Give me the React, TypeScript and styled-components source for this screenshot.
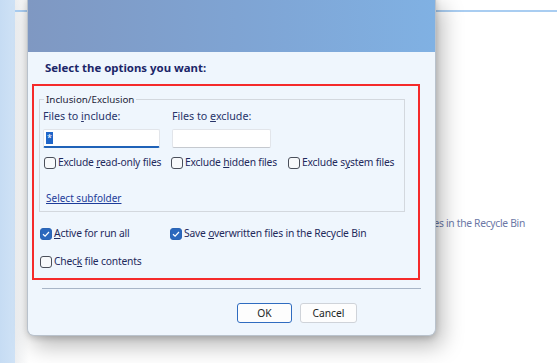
import styled, { createGlobalStyle } from "styled-components";

const GlobalStyle = createGlobalStyle`
  html, body {
    margin: 0;
    padding: 0;
  }
  body {
    font-family: "Noto Sans", "Open Sans", sans-serif;
    font-size: 10.3px;
    color: #1f2a5c;
  }
`;

function Check({ checked, children }: { checked?: boolean; children: React.ReactNode }) {
  return (
    <CheckRow>
      <Box $checked={checked}>
        {checked && (
          <svg width="10" height="10" viewBox="0 0 10 10">
            <path d="M2 5.2 L4.1 7.2 L8 3" fill="none" stroke="#fff" strokeWidth="1.2" />
          </svg>
        )}
      </Box>
      <span>{children}</span>
    </CheckRow>
  );
}

export default function App() {
  return (
    <>
      <GlobalStyle />
      <Desktop>
        <LeftStrip />
        <BackWindow>
          <BackLine />
          <BackText>Save overwritten files in the Recycle Bin</BackText>
        </BackWindow>

        <Dialog>
          <Header />
          <Body>
            <Title>Select the options you want:</Title>
            <Highlight>
              <Group>
                <Legend>Inclusion/Exclusion</Legend>
                <FieldRow>
                  <Field>
                    <Label>Files to <u>i</u>nclude:</Label>
                    <TextBox $focused>
                      <Selected>*</Selected>
                    </TextBox>
                  </Field>
                  <Field>
                    <Label>Files to <u>e</u>xclude:</Label>
                    <TextBox $width={99} />
                  </Field>
                </FieldRow>
                <ChecksRow>
                  <ChecksCol $width={127}>
                    <Check>Exclude <u>r</u>ead-only files</Check>
                  </ChecksCol>
                  <ChecksCol $width={117}>
                    <Check>Exclude <u>h</u>idden files</Check>
                  </ChecksCol>
                  <ChecksCol>
                    <Check>Exclude s<u>y</u>stem files</Check>
                  </ChecksCol>
                </ChecksRow>
                <Link>Select subfolder</Link>
              </Group>
              <OptionsRow $gap={14}>
                <ChecksCol $width={130}>
                  <Check checked><u>A</u>ctive for run all</Check>
                </ChecksCol>
                <Check checked>Save <u>o</u>verwritten files in the Recycle Bin</Check>
              </OptionsRow>
              <OptionsRow $gap={13}>
                <Check>Chec<u>k</u> file contents</Check>
              </OptionsRow>
            </Highlight>
            <Separator />
            <Buttons>
              <Button $default>OK</Button>
              <Button>Cancel</Button>
            </Buttons>
          </Body>
        </Dialog>
      </Desktop>
    </>
  );
}

const Desktop = styled.div`
  position: relative;
  display: flex;
  width: 557px;
  height: 363px;
  overflow: hidden;
  background: #ffffff;
`;

const LeftStrip = styled.div`
  width: 15px;
  flex: none;
  background: linear-gradient(90deg, #c6dcf3, #cfe2f6);
`;

const BackWindow = styled.div`
  flex: 1;
  display: flex;
  flex-direction: column;
  background: linear-gradient(90deg, #eceef0 0px, #ffffff 14px);
`;

const BackLine = styled.div`
  height: 2px;
  margin-top: 10px;
  background: #a9cdf1;
`;

const BackText = styled.div`
  margin-top: 204px;
  padding-right: 32px;
  text-align: right;
  letter-spacing: -0.3px;
  line-height: 15px;
  color: #6c78a6;
`;

const Dialog = styled.div`
  position: absolute;
  left: 27px;
  top: -4px;
  width: 409px;
  height: 340px;
  display: flex;
  flex-direction: column;
  background: #eff6fd;
  border: 1px solid #b9c2cc;
  border-top: none;
  border-radius: 0 0 7px 7px;
  box-sizing: border-box;
  box-shadow: 6px 10px 22px rgba(0, 0, 0, 0.28), 0 2px 6px rgba(0, 0, 0, 0.18);
`;

const Header = styled.div`
  height: 56px;
  flex: none;
  background: linear-gradient(90deg, #7f98c2 0%, #7fa6d6 60%, #80b1e3 100%);
`;

const Body = styled.div`
  display: flex;
  flex-direction: column;
  padding: 7px 0 0 4px;
`;

const Title = styled.div`
  font-size: 11.4px;
  font-weight: 700;
  color: #1b2669;
  padding-left: 13px;
  line-height: 18px;
`;

const Highlight = styled.div`
  margin-top: 7px;
  width: 388px;
  height: 196px;
  box-sizing: border-box;
  border: 2px solid #f52a2a;
  padding: 13px 13px 0 5px;
  display: flex;
  flex-direction: column;
`;

const Group = styled.div`
  position: relative;
  height: 113px;
  border: 1px solid #d3d8de;
  padding: 9px 0 0 3px;
  box-sizing: border-box;
  display: flex;
  flex-direction: column;
`;

const Legend = styled.div`
  position: absolute;
  top: -8px;
  left: 4px;
  padding: 0 2px;
  background: #eff6fd;
  font-size: 9.8px;
  line-height: 15px;
  color: #1c2338;
`;

const FieldRow = styled.div`
  display: flex;
  gap: 12px;
`;

const Field = styled.div`
  display: flex;
  flex-direction: column;
  gap: 5px;
`;

const Label = styled.div`
  line-height: 15px;
  font-size: 10.7px;
  color: #27346a;
`;

const TextBox = styled.div<{ $focused?: boolean; $width?: number }>`
  width: ${(p) => p.$width ?? 117}px;
  height: 19px;
  box-sizing: border-box;
  background: #ffffff;
  border: 1px solid #e2e5ea;
  border-bottom: ${(p) => (p.$focused ? "2px solid #1f62b8" : "1px solid #c5c9cf")};
  border-radius: 2px;
  padding: 2px 0 0 2px;
  display: flex;
  align-items: flex-start;
`;

const Selected = styled.span`
  background: #1f66c9;
  color: #ffffff;
  font-size: 9px;
  line-height: 12px;
  padding: 0 1px;
`;

const ChecksRow = styled.div`
  display: flex;
  margin-top: 7px;
  padding-left: 1px;
`;

const ChecksCol = styled.div<{ $width?: number }>`
  width: ${(p) => (p.$width ? `${p.$width}px` : "auto")};
  flex: none;
`;

const CheckRow = styled.label`
  display: flex;
  align-items: center;
  gap: 2px;
  line-height: 15px;
  letter-spacing: -0.2px;
  color: #1f2a5c;
  white-space: nowrap;
`;

const Box = styled.span<{ $checked?: boolean }>`
  flex: none;
  width: 12px;
  height: 12px;
  box-sizing: border-box;
  border-radius: 3px;
  border: 1px solid ${(p) => (p.$checked ? "#2a64b5" : "#4a4f5a")};
  background: ${(p) => (p.$checked ? "#2b68bd" : "#f7f9fb")};
  display: flex;
  align-items: center;
  justify-content: center;
`;

const Link = styled.div`
  margin-top: 21px;
  padding-left: 3px;
  color: #1d3c9a;
  text-decoration: underline;
  line-height: 15px;
  font-size: 10px;
`;

const OptionsRow = styled.div<{ $gap?: number }>`
  display: flex;
  margin-top: ${(p) => p.$gap ?? 13}px;
  padding-left: 1px;
`;

const Separator = styled.div`
  margin: 8px 0 0 10px;
  width: 379px;
  height: 1px;
  background: #a8b5c7;
`;

const Buttons = styled.div`
  display: flex;
  justify-content: flex-end;
  gap: 8px;
  padding-right: 78px;
  margin-top: 14px;
`;

const Button = styled.button<{ $default?: boolean }>`
  width: ${(p) => (p.$default ? 55 : 57)}px;
  height: 20px;
  box-sizing: border-box;
  font-family: "Noto Sans", sans-serif;
  font-size: 10.3px;
  color: #1c1f26;
  background: #fdfdfd;
  border: 1px solid ${(p) => (p.$default ? "#2f6cc0" : "#cfd3d9")};
  border-radius: 3px;
  padding: 0;
`;
